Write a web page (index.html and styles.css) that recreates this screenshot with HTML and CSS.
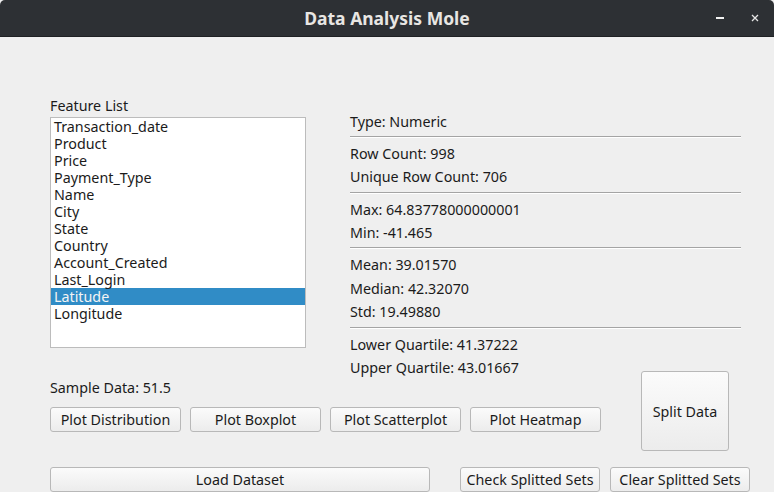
FILE: index.html
```html
<!DOCTYPE html>
<html>
<head>
<meta charset="utf-8">
<link rel="stylesheet" href="styles.css">
</head>
<body>
<div class="window">
  <header class="titlebar">
    <span class="title">Data Analysis Mole</span>
    <div class="controls">
      <span class="ctl-min"></span>
      <svg class="ctl-close" width="8" height="8" viewBox="0 0 8 8"><path d="M1 1L7 7M7 1L1 7" stroke="#e6e6e6" stroke-width="1.3"/></svg>
    </div>
  </header>
  <main class="content">
    <div class="top">
      <section class="features">
        <div class="caption">Feature List</div>
        <ul class="list">
          <li>Transaction_date</li>
          <li>Product</li>
          <li>Price</li>
          <li>Payment_Type</li>
          <li>Name</li>
          <li>City</li>
          <li>State</li>
          <li>Country</li>
          <li>Account_Created</li>
          <li>Last_Login</li>
          <li class="selected">Latitude</li>
          <li>Longitude</li>
        </ul>
      </section>
      <section class="stats">
        <div class="stat">Type: Numeric</div>
        <div class="sep"></div>
        <div class="stat">Row Count: 998</div>
        <div class="stat">Unique Row Count: 706</div>
        <div class="sep"></div>
        <div class="stat">Max: 64.83778000000001</div>
        <div class="stat">Min: -41.465</div>
        <div class="sep"></div>
        <div class="stat">Mean: 39.01570</div>
        <div class="stat">Median: 42.32070</div>
        <div class="stat">Std: 19.49880</div>
        <div class="sep"></div>
        <div class="stat">Lower Quartile: 41.37222</div>
        <div class="stat">Upper Quartile: 43.01667</div>
      </section>
    </div>
    <div class="middle">
      <div class="mid-left">
        <div class="sample">Sample Data: 51.5</div>
        <div class="plots">
          <button class="btn plot">Plot Distribution</button>
          <button class="btn plot">Plot Boxplot</button>
          <button class="btn plot">Plot Scatterplot</button>
          <button class="btn plot">Plot Heatmap</button>
        </div>
      </div>
      <button class="btn split">Split Data</button>
    </div>
    <div class="bottom">
      <button class="btn load">Load Dataset</button>
      <button class="btn sets">Check Splitted Sets</button>
      <button class="btn sets">Clear Splitted Sets</button>
    </div>
  </main>
</div>
</body>
</html>
```
FILE: styles.css
```css
* { box-sizing: border-box; }
html, body {
  margin: 0;
  padding: 0;
  width: 774px;
  height: 492px;
  overflow: hidden;
  background: #efefef;
}
body {
  font-family: "Noto Sans", "DejaVu Sans", sans-serif;
  font-size: 14.3px;
  color: #1b1b1b;
}
.window {
  width: 774px;
  height: 492px;
  display: flex;
  flex-direction: column;
}
.titlebar {
  height: 37px;
  flex: none;
  background: #2d3034;
  border-bottom: 1px solid #1f2124;
  border-radius: 5px 5px 0 0;
  display: flex;
  align-items: center;
  justify-content: center;
  position: relative;
}
.title {
  color: #e8e6e3;
  font-weight: bold;
  font-size: 17.5px;
  margin-top: -1px;
}
.controls {
  position: absolute;
  right: 15px;
  top: 0;
  height: 36px;
  display: flex;
  align-items: center;
  gap: 27px;
}
.ctl-min {
  display: block;
  width: 8px;
  height: 2px;
  background: #f2f2f2;
}
.ctl-close { display: block; }
.content {
  flex: 1;
  padding: 60px 24px 0 50px;
  display: flex;
  flex-direction: column;
}
.top {
  height: 274px;
  display: flex;
}
.features {
  width: 256px;
  flex: none;
}
.caption {
  line-height: 17px;
  height: 17px;
  margin-bottom: 3px;
}
.list {
  list-style: none;
  margin: 0;
  padding: 0;
  height: 231px;
  background: #fff;
  border: 1px solid #bcbcbc;
}
.list li {
  height: 17px;
  line-height: 17px;
  padding-left: 3px;
  white-space: nowrap;
}
.list li.selected {
  background: #308cc6;
  color: #f4f4f4;
}
.stats {
  margin-left: 44px;
  width: 391px;
  padding-top: 12.5px;
}
.stat {
  height: 23.4px;
  line-height: 23.4px;
  white-space: nowrap;
}
.sep {
  height: 2px;
  border-top: 1px solid #a4a4a4;
  border-bottom: 1px solid #ffffff;
  margin: 3px 0 4px;
}
.middle {
  height: 80px;
  display: flex;
}
.mid-left {
  width: 551px;
  flex: none;
}
.sample {
  margin-top: 8px;
  line-height: 17px;
  height: 17px;
}
.plots {
  margin-top: 11px;
  display: flex;
  gap: 9px;
}
.btn {
  font-family: inherit;
  font-size: 14.3px;
  color: #1b1b1b;
  background: linear-gradient(#fbfbfb, #ececec);
  border: 1px solid #b8b8b8;
  border-radius: 3px;
  padding: 0;
  height: 25px;
  line-height: 21px;
  white-space: nowrap;
}
.plot { width: 131px; }
.split {
  width: 88px;
  height: 80px;
  margin-left: 40px;
}
.bottom {
  margin-top: 16px;
  display: flex;
  gap: 10px;
}
.load { width: 380px; margin-right: 20px; }
.sets { width: 140px; }
```
